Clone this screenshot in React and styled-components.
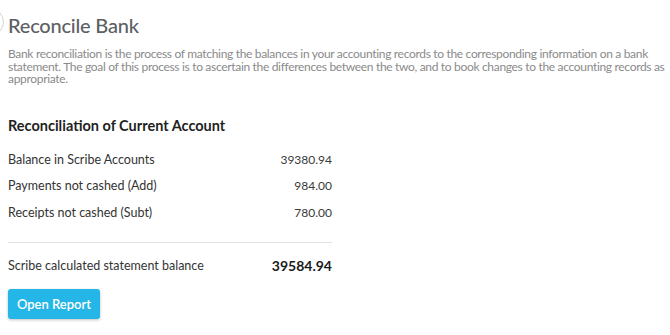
import React from 'react';
import styled, { createGlobalStyle } from 'styled-components';

const GlobalStyle = createGlobalStyle`
  html, body {
    margin: 0;
    background: #ffffff;
  }
  body {
    font-family: Lato, "Noto Sans", sans-serif;
    -webkit-font-smoothing: antialiased;
  }
`;

const Page = styled.section`
  position: relative;
  padding: 12px 4px 16px 8px;
  width: 670px;
  box-sizing: border-box;
`;

const EdgeCircle = styled.span`
  position: absolute;
  left: -24px;
  top: 8px;
  width: 26px;
  height: 26px;
  border: 1px solid #d4d4d4;
  border-radius: 50%;
`;

const Title = styled.h1`
  margin: 0;
  font-size: 20px;
  line-height: 26px;
  font-weight: 500;
  color: #5c5f63;
  letter-spacing: -0.2px;
`;

const Intro = styled.p`
  margin: 10px 0 0 0;
  font-size: 12px;
  line-height: 12.7px;
  color: #8a8a8a;
  letter-spacing: -0.32px;
`;

const Heading = styled.h2`
  margin: 30px 0 0 0;
  font-size: 14.5px;
  line-height: 20px;
  font-weight: 700;
  color: #1f1f1f;
`;

const Table = styled.div`
  width: 324px;
  margin-top: 10px;
  display: flex;
  flex-direction: column;
`;

const Row = styled.div`
  display: flex;
  justify-content: space-between;
  align-items: center;
  height: ${p => (p.$total ? '28px' : '26.5px')};
  font-size: 12.5px;
  color: #333333;
`;

const Value = styled.span`
  font-size: ${p => (p.$total ? '14px' : '12px')};
  font-weight: ${p => (p.$total ? 700 : 400)};
  color: ${p => (p.$total ? '#1a1a1a' : '#3a3a3a')};
`;

const Divider = styled.hr`
  border: 0;
  border-top: 1px solid #e3e3e3;
  margin: 16px 0 9px 0;
  width: 100%;
`;

const Button = styled.button`
  margin-top: 9px;
  width: 92px;
  height: 30px;
  border: 0;
  border-radius: 3px;
  background: #24b6e6;
  color: #ffffff;
  font-family: inherit;
  font-size: 13px;
  font-weight: 600;
  box-shadow: 0 1px 3px rgba(0, 0, 0, 0.25);
  cursor: pointer;
`;

const rows = [
  { label: 'Balance in Scribe Accounts', value: '39380.94' },
  { label: 'Payments not cashed (Add)', value: '984.00' },
  { label: 'Receipts not cashed (Subt)', value: '780.00' },
];

export default function App() {
  return (
    <>
      <GlobalStyle />
      <Page>
        <EdgeCircle />
        <Title>Reconcile Bank</Title>
        <Intro>
          Bank reconciliation is the process of matching the balances in your accounting records to the corresponding information on a bank
          statement. The goal of this process is to ascertain the differences between the two, and to book changes to the accounting records as
          appropriate.
        </Intro>
        <Heading>Reconciliation of Current Account</Heading>
        <Table>
          {rows.map(r => (
            <Row key={r.label}>
              <span>{r.label}</span>
              <Value>{r.value}</Value>
            </Row>
          ))}
          <Divider />
          <Row $total>
            <span>Scribe calculated statement balance</span>
            <Value $total>39584.94</Value>
          </Row>
        </Table>
        <Button>Open Report</Button>
      </Page>
    </>
  );
}
